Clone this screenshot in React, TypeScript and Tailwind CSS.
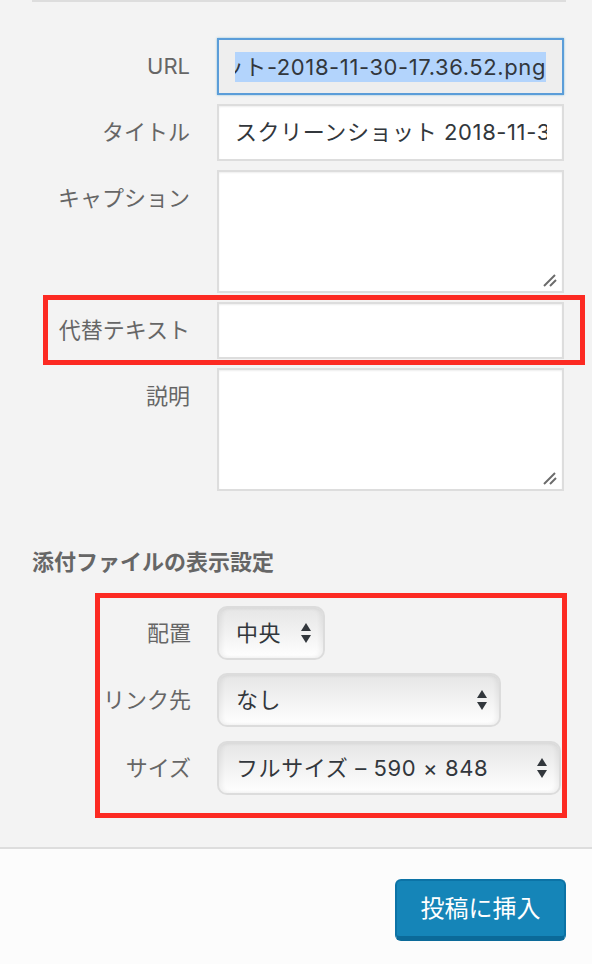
import React from 'react';

const font = { fontFamily: 'Inter, "Noto Sans CJK JP", sans-serif' };

function Grip() {
  return (
    <svg className="absolute right-[5px] bottom-[4px]" width="14" height="14" viewBox="0 0 14 14">
      <line x1="1" y1="13" x2="12" y2="2" stroke="#6b6b6b" strokeWidth="2" />
      <line x1="7" y1="13" x2="13" y2="7" stroke="#6b6b6b" strokeWidth="2" />
    </svg>
  );
}

function Arrows() {
  return (
    <svg width="10" height="20" viewBox="0 0 10 20" className="shrink-0">
      <path d="M5 0 L10 8 L0 8 Z" fill="#32373c" />
      <path d="M0 12 L10 12 L5 20 Z" fill="#32373c" />
    </svg>
  );
}

function Row({ label, children }: { label: string; children: React.ReactNode }) {
  return (
    <div className="flex items-start mb-[9px]">
      <div className="w-[190px] h-[57px] flex items-center justify-end text-[22px] text-[#666]">{label}</div>
      <div className="ml-[27px] w-[347px]">{children}</div>
    </div>
  );
}

function Select({ value, width }: { value: string; width: string }) {
  return (
    <div
      className={`${width} h-[54px] flex items-center justify-between pl-[17px] pr-[12px] rounded-[10px] border-2 border-[#dcdcdc] bg-gradient-to-b from-[#e6e6e6] via-[#f2f2f2] to-white shadow-[inset_3px_0_4px_rgba(0,0,0,0.05),inset_-3px_0_4px_rgba(0,0,0,0.05)] text-[22px] text-[#32373c]`}
    >
      <span className="whitespace-nowrap tracking-[0.6px]">{value}</span>
      <Arrows />
    </div>
  );
}

export default function App() {
  const input = 'h-[57px] border-2 border-[#dddddd] bg-white shadow-[inset_0_1px_2px_rgba(0,0,0,0.07)]';
  const area = 'relative h-[123px] border-2 border-[#dddddd] bg-white shadow-[inset_0_1px_2px_rgba(0,0,0,0.07)]';

  return (
    <div className="w-[592px] h-[964px] bg-[#f3f3f3] flex flex-col overflow-hidden" style={font}>
      <div className="ml-[32px] w-[534px] h-[2px] bg-[#dddddd]" />

      <div className="relative mt-[36px]">
        <Row label="URL">
          <div className="h-[57px] border-2 border-[#5b9dd9] bg-[#eeeeee] flex items-center pl-[16px] pr-[16px] shadow-[0_0_2px_rgba(30,140,190,0.5)]">
            <div className="flex-1 flex justify-end overflow-hidden">
              <span className="whitespace-nowrap bg-[#b3d4fc] text-[22px] leading-[30px] tracking-[0.6px] text-[#32373c]">
                スクリーンショット-2018-11-30-17.36.52.png
              </span>
            </div>
          </div>
        </Row>
        <Row label="タイトル">
          <div className={`${input} flex items-center pl-[16px] pr-[15px]`}>
            <div className="flex-1 overflow-hidden whitespace-nowrap text-[22px] tracking-[0.6px] text-[#32373c]">
              スクリーンショット 2018-11-30 17.36.52
            </div>
          </div>
        </Row>
        <Row label="キャプション">
          <div className={area}>
            <Grip />
          </div>
        </Row>
        <Row label="代替テキスト">
          <div className={input} />
        </Row>
        <Row label="説明">
          <div className={area}>
            <Grip />
          </div>
        </Row>

        {/* annotation around alt text */}
        <div className="absolute left-[43px] top-[257px] w-[542px] h-[70px] border-[5px] border-[#fc2a22]" />
      </div>

      <div className="mt-[47px] ml-[32px] text-[22px] leading-[30px] font-semibold text-[#666]">添付ファイルの表示設定</div>

      <div className="mt-[16px] ml-[95px] w-[472px] h-[225px] border-[5px] border-[#fc2a22] pt-[8px]">
        <div className="flex items-center">
          <div className="w-[91px] text-right text-[22px] text-[#666]">配置</div>
          <div className="ml-[26px]">
            <Select value="中央" width="w-[108px]" />
          </div>
        </div>
        <div className="flex items-center mt-[13px]">
          <div className="w-[91px] text-right text-[22px] text-[#666] whitespace-nowrap">リンク先</div>
          <div className="ml-[26px]">
            <Select value="なし" width="w-[284px]" />
          </div>
        </div>
        <div className="flex items-center mt-[14px]">
          <div className="w-[91px] text-right text-[22px] text-[#666]">サイズ</div>
          <div className="ml-[26px]">
            <Select value="フルサイズ – 590 × 848" width="w-[344px]" />
          </div>
        </div>
      </div>

      <div className="mt-[29px] flex-1 border-t-2 border-[#dddddd] bg-[#fcfcfc] flex justify-end items-start pt-[30px] pr-[26px]">
        <button className="w-[171px] h-[62px] rounded-[6px] bg-[#1585b8] border-2 border-[#0c73a6] border-b-[5px] border-b-[#0b6a99] text-white text-[24px] flex items-center justify-center">
          投稿に挿入
        </button>
      </div>
    </div>
  );
}
